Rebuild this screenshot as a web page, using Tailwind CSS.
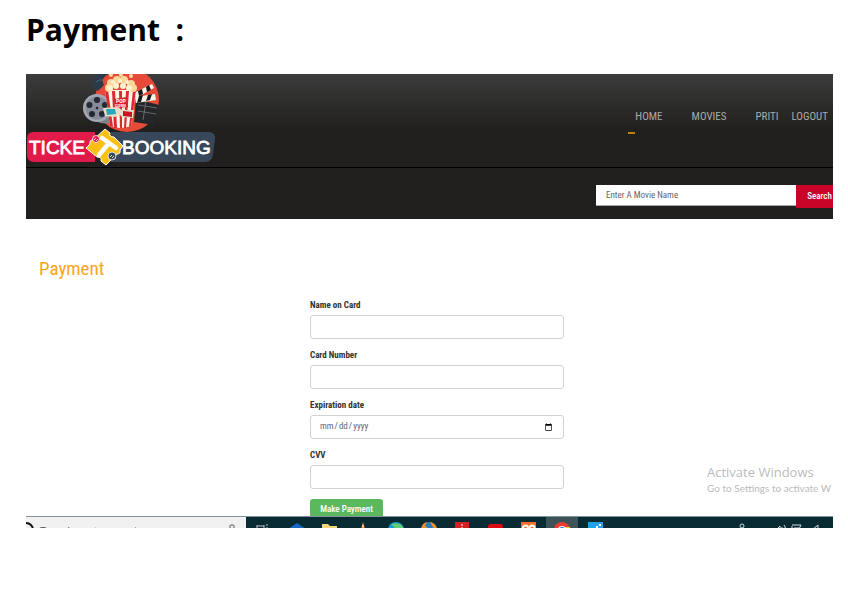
<!DOCTYPE html>
<html lang="en">
<head>
<meta charset="utf-8">
<meta name="viewport" content="width=device-width, initial-scale=1">
<title>Payment</title>
<script src="https://cdn.jsdelivr.net/npm/@tailwindcss/browser@4"></script>
</head>
<body class="bg-white font-['Roboto_Condensed',Roboto,sans-serif] text-[9px] text-[#333]">
<h1 class="px-[26px] pt-2 pb-[22px] font-['Open_Sans',sans-serif] text-[30px] leading-[44px] font-bold whitespace-pre text-black">Payment  :</h1>
<main class="relative mr-[15px] ml-[26px] overflow-hidden">
  <header class="bg-[#21201e]">
    <div class="flex items-start justify-between border-b border-black bg-linear-to-b from-[#3c3c3c] to-[#21201e] to-60%">
      <a href="#" aria-label="Ticket Booking">
        <svg class="block" width="190" height="93" viewBox="0 0 190 93">
          <circle cx="101" cy="26" r="32" fill="#e54b38"/>
          <path d="M67 12Q66 5 73 0h9Q74 4 78 11l-6 6z" fill="#2b3b4c"/>
          <path d="M70 8q3-3 7-2" stroke="#53667a" fill="none"/>
          <path d="M70 47q8 5 21 0v-5H75z" fill="#7d828b"/>
          <circle cx="71" cy="34" r="14" fill="#a3a9b3"/><circle cx="71" cy="34" r="11.500" fill="#858c98"/>
          <g fill="#232833"><circle cx="71" cy="26" r="3"/><circle cx="63.500" cy="31" r="3"/><circle cx="66" cy="40" r="3"/><circle cx="76" cy="40" r="3"/><circle cx="79" cy="31" r="3"/><circle cx="71" cy="34" r="1.300"/></g>
          <path d="M110 25l23 6-5 20-20-3z" fill="#24262a"/>
          <path d="M112 31l19 3M112 37l18 3M120 27l-3 19" stroke="#777" stroke-width=".8"/>
          <path d="M108 19l18-9 2 4-18 10z" fill="#f7f3e8"/><path d="M109 23l20-3 1 6-20 3z" fill="#f7f3e8"/>
          <path d="M112 17l4-2 1 5-4 2zM120 13l3-2 2 5-4 2zM113 22l4-1-2 7-4 1zM122 21l4-1-2 6-4 1z" fill="#17191c"/>
          <path d="M79 16h31l-5 36q-11 4-21 0z" fill="#fff5e5"/>
          <path d="M79 16h3l5 37-3-1zM86 17h3l2 37h-3zM93 17h3v37h-2zM100 17h3l-3 37h-2zM107 16h3l-5 36-2 1z" fill="#dc2a35"/>
          <g fill="#f9d99b"><circle cx="83" cy="14" r="4"/><circle cx="85" cy="9" r="4"/><circle cx="91" cy="6" r="4"/><circle cx="98" cy="6" r="4"/><circle cx="105" cy="10" r="4"/><circle cx="107" cy="14" r="4"/><circle cx="85" cy="1" r="2"/><circle cx="95" cy="1" r="2"/><circle cx="105" cy="2" r="2"/></g>
          <g fill="#fff2cf"><circle cx="84" cy="14" r="3"/><circle cx="90" cy="12" r="3"/><circle cx="97" cy="12" r="3"/><circle cx="103" cy="14" r="3"/><circle cx="94" cy="7" r="2"/><circle cx="101" cy="8" r="2"/><circle cx="87" cy="8" r="2"/></g>
          <path d="M88 25l13-2 1 10-12 1z" fill="#d91f31"/>
          <text x="90" y="29" font-family="Roboto,sans-serif" font-size="5" font-weight="700" fill="#fff">POP</text>
          <text x="89" y="33" font-family="Roboto,sans-serif" font-size="4" font-weight="700" fill="#fff">CORN</text>
          <path d="M77 34l15-1 4 3 12 0-1 8-11-1-3-3-4 3-10-1z" fill="#e9dcc6"/>
          <path d="M80 35l9 0 1 5-9 1z" fill="#21a9bd"/><path d="M97 37l9 1v5l-9-1z" fill="#c71323"/>
          <path d="M7 58h62v30H8Q1 88 1 81V65Q1 58 7 58z" fill="#e01b49"/>
          <path d="M85 58h97q8 0 7 8l-2 14q-1 8-8 8H85z" fill="#38475a"/>
          <path d="M79 55l5 4q-1 4 4 4l9 9-3 4q1 4-3 4l-11 11-5-4q1-4-4-4L60 74l4-4q-1-4 3-4z" fill="#fdbf12" stroke="#fff" stroke-width="1"/>
          <path d="M76 64l14 10M83 69L73 81" fill="none" stroke="#fff" stroke-width="4.500" stroke-linecap="round"/>
          <circle cx="70" cy="65" r="3.500" fill="#e01b49" stroke="#fff" stroke-width=".8"/><path d="M68 66l2-2m0 3l2-2" stroke="#fff" stroke-width=".8"/>
          <circle cx="86" cy="82" r="4" fill="#38475a" stroke="#fff" stroke-width=".8"/><path d="M84 83l2-2m0 3l2-2" stroke="#fff" stroke-width=".8"/>
          <g font-family="Liberation Sans,sans-serif" font-size="19" fill="#fff" stroke="#fff" stroke-width=".8"><text x="3" y="80">TICKE</text><text x="96" y="80">BOOKING</text></g>
        </svg>
      </a>
      <nav class="flex pt-[34px] pr-[5px] text-[11px] leading-[18px] text-[#aaa]">
        <a href="#" class="relative mr-[29px]">HOME<span class="absolute top-6 -left-[7px] h-[2px] w-[7px] bg-[#bb830b]"></span></a>
        <a href="#" class="mr-[29px]">MOVIES</a>
        <a href="#" class="mr-[13px]">PRITI</a>
        <a href="#">LOGOUT</a>
      </nav>
    </div>
    <form class="-mr-[10px] flex items-start justify-end pt-[17px] pb-[11px]">
      <input type="text" aria-label="Movie name" placeholder="Enter A Movie Name" class="h-[21px] w-[200px] border-b border-[#aaa] bg-white px-[10px] text-[9px] placeholder:text-[#666]">
      <button type="button" class="h-[23px] w-[47px] bg-[#c90428] text-[9px] font-medium text-white">Search</button>
    </form>
  </header>
  <h2 class="px-[13px] pt-[38px] pb-[17px] text-[19px] leading-6 text-[#faa61a]">Payment</h2>
  <div class="flex h-[218px] justify-center pl-[15px]">
    <form class="w-[254px] text-[9px]">
      <label for="name" class="block h-[17px] leading-[14px] font-bold">Name on Card</label>
      <input id="name" type="text" class="mb-[9px] block h-6 w-full rounded-[3px] border border-[#d2d2d2] px-2">
      <label for="card" class="block h-[17px] leading-[14px] font-bold">Card Number</label>
      <input id="card" type="text" class="mb-[9px] block h-6 w-full rounded-[3px] border border-[#d2d2d2] px-2">
      <label for="date" class="block h-[17px] leading-[14px] font-bold">Expiration date</label>
      <input id="date" type="date" class="mb-[9px] block h-6 w-full rounded-[3px] border border-[#d2d2d2] px-2 text-[9px] text-[#666]">
      <label for="cvv" class="block h-[17px] leading-[14px] font-bold">CVV</label>
      <input id="cvv" type="text" class="mb-[10px] block h-6 w-full rounded-[3px] border border-[#d2d2d2] px-2">
      <button type="button" class="h-[22px] w-[73px] rounded-[3px] bg-[#5cb85c] text-[9px] font-medium text-white">Make Payment</button>
    </form>
  </div>
  <aside class="absolute right-0 bottom-[33px] w-[126px] overflow-hidden font-['Open_Sans',sans-serif] whitespace-nowrap text-[#bbb]">
    <p class="text-[13px] leading-[17px]">Activate Windows</p>
    <p class="font-['Lato',sans-serif] text-[10px] leading-[14px]">Go to Settings to activate W</p>
  </aside>
  <footer class="relative flex h-3 overflow-hidden border-t border-[#829499] bg-[#072a33]">
    <div class="flex w-[220px] shrink-0 justify-between bg-[#f1f1f1] pr-[10px]">
      <svg width="110" height="12" viewBox="0 0 110 12" aria-hidden="true"><circle cx="0" cy="13" r="7" fill="none" stroke="#111" stroke-width="2"/><text x="14" y="18" font-family="Open Sans,sans-serif" font-size="11" fill="#555">Type here to search</text></svg>
      <svg width="8" height="12" viewBox="0 0 8 12" aria-hidden="true"><rect x="2" y="8" width="4" height="9" rx="1" fill="none" stroke="#555"/></svg>
    </div>
    <svg class="shrink-0" width="587" height="12" viewBox="0 0 587 12" aria-hidden="true">
      <rect x="300" width="32" height="12" fill="#3c5358"/>
      <path d="M11 8v4M11 9h7M18 8v4M20 8h2M21 10v2" stroke="#bdc9cb" fill="none"/>
      <path d="M42 12l9-6 9 6z" fill="#1768c5"/>
      <path d="M76 7h6l2 2h7v3H76z" fill="#f1d577"/>
      <path d="M115 12l2-7 2 7z" fill="#ee913e"/><path d="M116 9h2" stroke="#fff"/>
      <circle cx="150" cy="13" r="8" fill="#149ad5"/><path d="M145 7q10-3 13 5h-8z" fill="#61cb70"/>
      <circle cx="183" cy="13" r="8" fill="#277cbc"/><path d="M175 12q1-6 6-7l-2 4 4 3zM184 5q6 1 7 7h-3z" fill="#f48e2c"/>
      <path d="M209 5h14v7h-14z" fill="#d51f25"/><path d="M216 7v2m0 1v2" stroke="#fff"/>
      <rect x="242" y="7" width="15" height="10" rx="3" fill="#dc0b12"/>
      <path d="M275 5h15v7h-15z" fill="#f2702f"/><g fill="none" stroke="#fff" stroke-width="2"><circle cx="279.500" cy="11" r="2.500"/><circle cx="286" cy="11" r="2.500"/></g>
      <circle cx="316" cy="13" r="8" fill="#e63c31"/><path d="M316 10h8v3z" fill="#f8cb36"/><circle cx="316" cy="13" r="4" fill="#fff"/><circle cx="316" cy="13" r="3" fill="#2677db"/>
      <path d="M342 5h15v7h-15z" fill="#24a0e8"/><path d="M350 9h2v3h-2zM353 7h2v2h-2z" fill="#fff"/>
      <g fill="none" stroke="#d3dcde"><circle cx="496" cy="9" r="2"/><path d="M517 12l1-1 1 1M531 12l3-3v3m2-2v2m2-4q2 2 1 4M546 8h9l-2 4m-7-3v3m2-1h5M567 12l5-4v4"/></g>
    </svg>
  </footer>
</main>
</body>
</html>
